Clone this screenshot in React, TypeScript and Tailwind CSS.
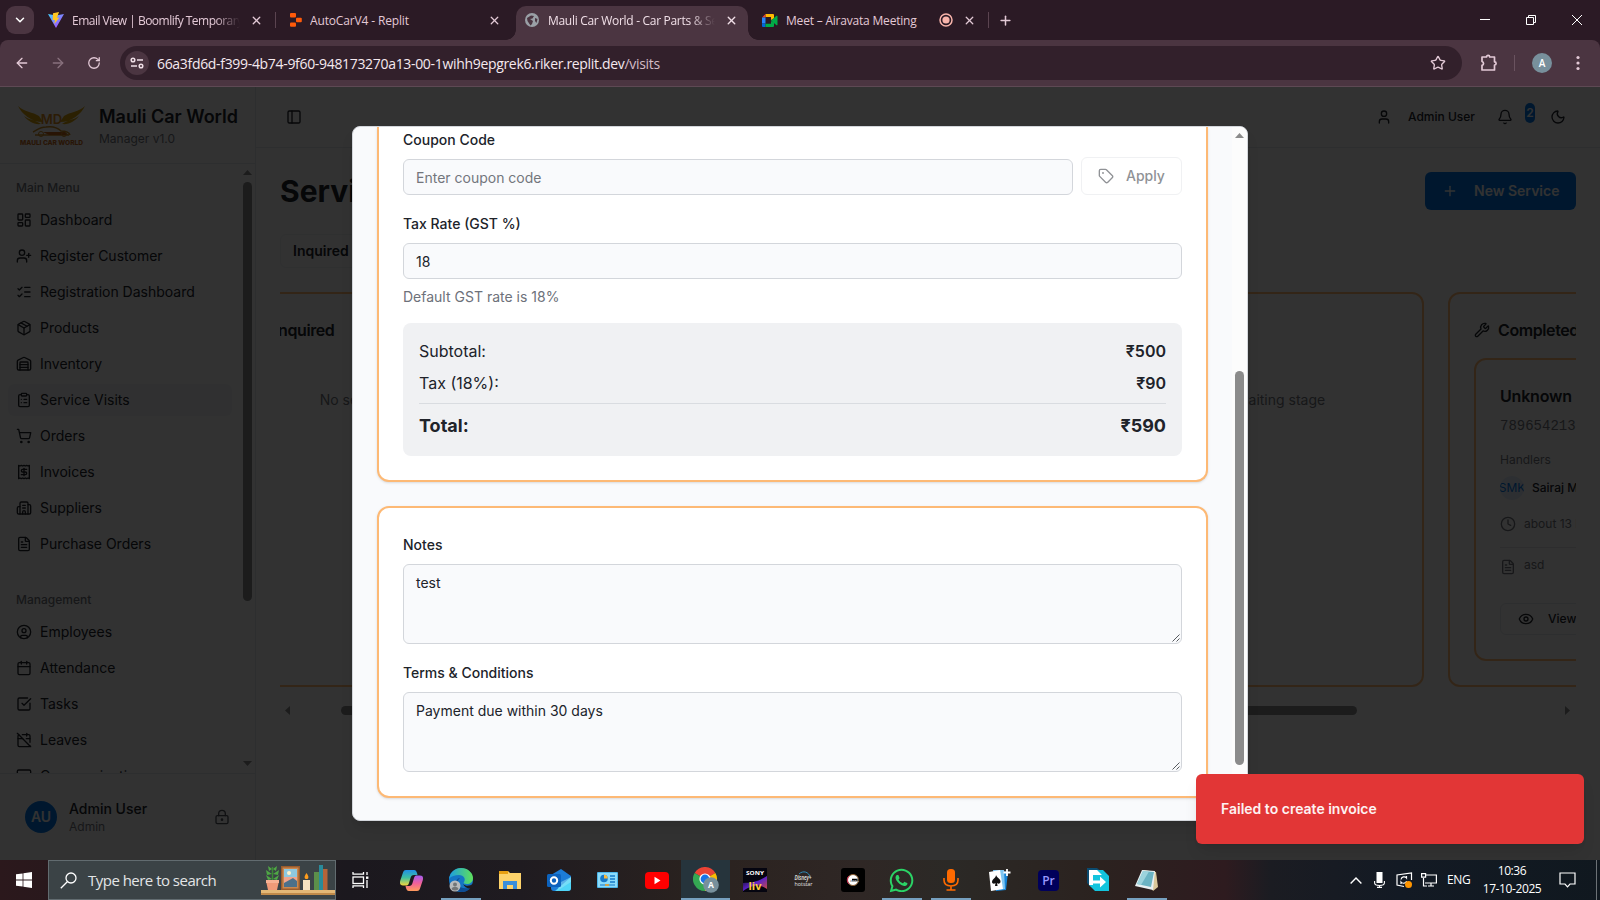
import type { ReactNode } from "react";
import {
  ArrowLeft, ArrowRight, Bell, Building2, Calendar, CalendarOff, ChevronDown, CircleUser, ClipboardList, Clock,
  Eye, FileText, LayoutDashboard, ListChecks, Lock, MessageSquare, Moon, Package, PanelLeft, Plus, Receipt,
  RotateCw, ShoppingCart, SquareCheckBig, Star, Tag, User, UserPlus, Warehouse, Wrench, X,
} from "lucide-react";
import { FaWhatsapp } from "react-icons/fa";

const segoe = "font-['Open_Sans',sans-serif]";

function TabTitle({ children, className = "" }: { children: ReactNode; className?: string }) {
  return <span className={`overflow-hidden whitespace-nowrap pt-[2px] text-[12px] ${className}`}>{children}</span>;
}

function Browser() {
  return (
    <div className={`${segoe} bg-[#2b1a25] text-[#e3c9d6]`}>
      <div className="flex h-10 items-center">
        <div className="ml-1.5 flex h-7 w-7 items-center justify-center rounded-[9px] bg-[#4b3541]">
          <ChevronDown size={14} strokeWidth={2.6} className="text-white" />
        </div>
        <svg className="ml-[14px]" width="16" height="16" viewBox="0 0 16 16">
          <defs>
            <linearGradient id="vite" x1="0" y1="0" x2="1" y2="1"><stop stopColor="#41d1ff" /><stop offset="1" stopColor="#bd34fe" /></linearGradient>
          </defs>
          <path d="M0 2 8 16 16 2 8 3.5Z" fill="url(#vite)" />
          <path d="M11 0 5 1.2 4.7 8H7l-.7 4L11.2 5.8H9Z" fill="#ffc71f" />
        </svg>
        <TabTitle className="ml-2 w-[168px] tracking-[-0.52px] [mask-image:linear-gradient(to_right,#000_85%,transparent)]">Email View | Boomlify Temporary</TabTitle>
        <X size={13} strokeWidth={2.4} className="ml-[10px]" />
        <div className="ml-[12px] h-4 w-px bg-[#5b4450]" />
        <svg className="ml-[14px]" width="12" height="14" viewBox="0 0 12 14" fill="#ff5a0a">
          <rect width="6" height="4.4" rx="1" /><rect x="6" y="4.7" width="5.8" height="4.5" rx="1" /><rect y="9.4" width="6" height="4.4" rx="1" />
        </svg>
        <TabTitle className="ml-[8px] w-[170px] tracking-[-0.15px]">AutoCarV4 - Replit</TabTitle>
        <X size={13} strokeWidth={2.4} className="ml-[8px]" />
        <div className="mt-auto ml-[5px] h-[10px] w-[10px] bg-[radial-gradient(circle_at_0_0,#2b1a25_9.5px,#4b3541_10px)]" />
        <div className="mt-1.5 flex h-[34px] w-[232px] items-center rounded-t-[10px] bg-[#4b3541] pb-1.5 text-[#f0dfe7]">
          <svg className="ml-[9px]" width="14" height="14" viewBox="0 0 14 14">
            <circle cx="7" cy="7" r="7" fill="#9aa0a6" />
            <path d="M2 5 6 2.5 9 3 7.5 5.5 5 6l3 2-1 3-1.5 1.5L2.5 8Z M10 5l2.5 1-1 4-1.5-2Z" fill="#4b3541" />
          </svg>
          <TabTitle className="ml-[9px] w-[167px] tracking-[-0.3px] [mask-image:linear-gradient(to_right,#000_85%,transparent)]">Mauli Car World - Car Parts &amp; Service</TabTitle>
          <X size={13} strokeWidth={2.6} className="ml-[10px]" />
        </div>
        <div className="mt-auto h-[10px] w-[10px] bg-[radial-gradient(circle_at_100%_0,#2b1a25_9.5px,#4b3541_10px)]" />
        <svg className="ml-[4px]" width="16" height="13" viewBox="0 0 16 13">
          <path d="M3.5 0H11a1 1 0 0 1 1 1v3.5L9 6V3H3.5Z" fill="#ffba00" />
          <path d="M0 3.5 3.5 0v3.5Z" fill="#ea4335" />
          <path d="M0 3.5h3.5V9.5H0Z" fill="#2684fc" /><path d="M0 9.5h3.5V13H1a1 1 0 0 1-1-1Z" fill="#0066da" />
          <path d="M3.5 9.8H9V7l3 2v3a1 1 0 0 1-1 1H3.5Z M9 6.5l5.5-4.7c.6-.4 1 0 1 .5v8.4c0 .6-.5.8-1 .5Z" fill="#00ac47" />
        </svg>
        <TabTitle className="ml-[8px] w-[140px] tracking-[-0.2px]">Meet – Airavata Meeting</TabTitle>
        <svg className="ml-[13px]" width="14" height="14" viewBox="0 0 14 14"><circle cx="7" cy="7" r="6" fill="none" stroke="#f8b4ab" strokeWidth="1.5" /><circle cx="7" cy="7" r="3.6" fill="#f8b4ab" /></svg>
        <X size={13} strokeWidth={2.4} className="ml-[10px]" />
        <div className="ml-[12px] h-4 w-px bg-[#5b4450]" />
        <Plus size={15} strokeWidth={2.4} className="ml-[9px]" />
        <svg className="mr-[17px] ml-auto" width="104" height="12" viewBox="0 0 104 12" fill="none" stroke="#fff" strokeWidth="1">
          <path d="M1 5.5h10M47.5 3.5h7v7h-7ZM49.5 3V1.5h7v7H55M93 1l10 10M103 1 93 11" />
        </svg>
      </div>
      <div className="flex h-[47px] items-center rounded-t-[8px] border-b border-[#5e4954] bg-[#4b3541]">
        <ArrowLeft size={16} className="ml-[14px]" />
        <ArrowRight size={16} className="ml-[20px] opacity-40" />
        <RotateCw size={14} strokeWidth={2.2} className="ml-[21px]" />
        <div className="ml-[19px] flex h-[34px] w-[1342px] items-center rounded-full bg-[#32202b] pl-[5px]">
          <div className="flex h-6 w-6 items-center justify-center rounded-full bg-[#4b3541]">
            <svg width="14" height="12" viewBox="0 0 14 12" fill="none" stroke="#f0dfe7" strokeWidth="1.5"><circle cx="3" cy="3" r="1.8" /><path d="M7 3h6M1 9h6" /><circle cx="11" cy="9" r="1.8" /></svg>
          </div>
          <span className="ml-[8px] text-[14px] tracking-[-0.32px] whitespace-nowrap text-[#f5e9ef]">
            66a3fd6d-f399-4b74-9f60-948173270a13-00-1wihh9epgrek6.riker.replit.dev<span className="text-[#d3bcc7]">/visits</span>
          </span>
          <Star size={16} className="mr-[16px] ml-auto" />
        </div>
        <svg className="ml-[18px]" width="18" height="18" viewBox="0 0 18 18" fill="none" stroke="currentColor" strokeWidth="1.7">
          <path d="M2 3h4.5a1.6 1.6 0 0 1 3.2 0H14.5v4.8a1.6 1.6 0 0 1 0 3.2v5H2v-4.6a2 2 0 0 0 0-3.9Z" strokeLinejoin="round" />
        </svg>
        <div className="ml-[16px] h-4 w-px bg-[#6a535f]" />
        <div className="ml-[17px] flex h-5 w-5 items-center justify-center rounded-full bg-[#78909c] text-[10px] font-semibold text-white">A</div>
        <svg className="ml-[24px]" width="4" height="16" viewBox="0 0 4 16" fill="currentColor"><circle cx="2" cy="2.5" r="1.6" /><circle cx="2" cy="8" r="1.6" /><circle cx="2" cy="13.5" r="1.6" /></svg>
      </div>
    </div>
  );
}

const mainMenu = [
  { label: "Dashboard", Icon: LayoutDashboard },
  { label: "Register Customer", Icon: UserPlus },
  { label: "Registration Dashboard", Icon: ListChecks },
  { label: "Products", Icon: Package },
  { label: "Inventory", Icon: Warehouse },
  { label: "Service Visits", Icon: ClipboardList },
  { label: "Orders", Icon: ShoppingCart },
  { label: "Invoices", Icon: Receipt },
  { label: "Suppliers", Icon: Building2 },
  { label: "Purchase Orders", Icon: FileText },
];
const management = [
  { label: "Employees", Icon: CircleUser },
  { label: "Attendance", Icon: Calendar },
  { label: "Tasks", Icon: SquareCheckBig },
  { label: "Leaves", Icon: CalendarOff },
  { label: "Communication", Icon: MessageSquare },
];

function MenuGroup({ title, items }: { title: string; items: typeof mainMenu }) {
  return (
    <div className="p-2">
      <div className="flex h-8 items-center px-2 text-xs font-medium text-[#73767c]">{title}</div>
      <div className="flex flex-col gap-1">
        {items.map(({ label, Icon }) => (
          <div key={label} className={`flex h-8 items-center gap-2 rounded-md px-2 text-sm ${label === "Service Visits" ? "bg-[#f0f1f3]" : ""}`}>
            <Icon size={16} />
            {label}
          </div>
        ))}
      </div>
    </div>
  );
}

function Logo() {
  return (
    <svg width="69" height="42" viewBox="0 0 69 42">
      <path d="M1 2c6 6 15 6 21 10l4 6C14 18 5 10 1 2ZM7 12c5 4 12 4 17 8-7 1-13-3-17-8ZM68 2c-6 6-15 6-21 10l-4 6C55 18 64 10 68 2ZM62 12c-5 4-12 4-17 8 7 1 13-3 17-8Z" fill="#d6a10c" />
      <text x="34.5" y="20" textAnchor="middle" fontSize="13" fontWeight="600" fill="#d98a1d" fontFamily="Inter, sans-serif">MD</text>
      <path d="M16 28c4-2 7-5 13-5 6-1 11 0 15 4 4 0 8 1 9 4M18 31h34" fill="none" stroke="#c98a20" strokeWidth="1.5" />
      <path d="M26 28h22l3 3H32Z" fill="#c8641c" />
      <circle cx="24" cy="30" r="2.5" fill="none" stroke="#c98a20" /><circle cx="47" cy="30" r="2.5" fill="none" stroke="#c98a20" />
      <text x="34.5" y="41" textAnchor="middle" fontSize="6.6" fontWeight="800" textLength="63" fill="#c86a1c" fontFamily="Inter, sans-serif">MAULI CAR WORLD</text>
    </svg>
  );
}

function Sidebar() {
  return (
    <aside className="flex w-64 shrink-0 flex-col border-r border-[#e2e4e8]">
      <div className="flex h-[77px] shrink-0 items-center gap-[13px] border-b border-[#e2e4e8] pl-[17px]">
        <Logo />
        <div>
          <div className="text-lg leading-7 font-semibold whitespace-nowrap">Mauli Car World</div>
          <div className="text-xs text-[#73767c]">Manager v1.0</div>
        </div>
      </div>
      <div className="flex h-[609px] overflow-hidden">
        <div className="flex w-60 flex-col gap-2">
          <MenuGroup title="Main Menu" items={mainMenu} />
          <MenuGroup title="Management" items={management} />
        </div>
        <div className="flex w-[15px] flex-col items-center pt-[6px]">
          <svg width="9" height="5" viewBox="0 0 9 5" fill="#8b8b8b"><path d="M0 5 4.5 0 9 5Z" /></svg>
          <div className="mt-[7px] h-[419px] w-[9px] rounded-full bg-[#8b8b8b]" />
          <svg className="mt-auto mb-[7px]" width="9" height="5" viewBox="0 0 9 5" fill="#8b8b8b"><path d="M0 0 4.5 5 9 0Z" /></svg>
        </div>
      </div>
      <div className="flex flex-1 items-center border-t border-[#e2e4e8] pr-[25px] pl-[25px]">
        <div className="flex h-8 w-8 items-center justify-center rounded-full bg-[#0075e6] text-sm font-semibold text-[#f9fafb]">AU</div>
        <div className="ml-3">
          <div className="text-sm font-medium">Admin User</div>
          <div className="text-xs text-[#73767c]">Admin</div>
        </div>
        <svg className="ml-auto text-[#50545c]" width="16" height="16" viewBox="0 0 24 24" fill="none" stroke="currentColor" strokeWidth="2" strokeLinecap="round" strokeLinejoin="round">
          <circle cx="12" cy="16" r="1" /><rect x="3" y="10" width="18" height="12" rx="2" /><path d="M7 10V7a5 5 0 0 1 10 0v3" />
        </svg>
      </div>
    </aside>
  );
}

function Column({ title, stage }: { title: string; stage: string }) {
  return (
    <div className="h-[395px] w-96 shrink-0 rounded-xl border-2 border-[#fdb975] p-6">
      <div className="flex h-6 items-center gap-2 text-base font-semibold tracking-tight"><Clock size={16} />{title}</div>
      <div className="mt-12 text-center text-sm text-[#73767c]">{stage}</div>
    </div>
  );
}

function Main() {
  return (
    <main className="flex w-[1344px] flex-col">
      <header className="flex h-[61px] shrink-0 items-center border-b border-[#e2e4e8] pr-[34px] pl-[30px]">
        <PanelLeft size={16} />
        <User size={16} className="ml-auto" />
        <span className="ml-4 w-[67px] text-xs font-medium whitespace-nowrap">Admin User</span>
        <Bell size={16} className="ml-[22px]" />
        <span className="mb-2 ml-[12px] flex h-5 w-[10px] items-center justify-center rounded-full bg-[#0075e6] text-xs font-semibold text-[#f9fafb]">2</span>
        <Moon size={16} className="ml-[15px]" />
      </header>
      <div className="flex flex-col px-6 pt-6">
        <div className="flex h-[38px] items-center justify-between">
          <h1 className="text-3xl font-bold">Service Visits</h1>
          <div className="flex h-[38px] w-[151px] items-center rounded-md bg-[#0075e6] pl-[17px] text-sm font-semibold whitespace-nowrap text-[#f9fafb]"><Plus size={16} /><span className="ml-4">New Service</span></div>
        </div>
        <div className="mt-6 flex h-[34px] w-[460px] items-center rounded-md border border-[#eceef1] pl-3 text-sm font-semibold">Inquired</div>
        <div className="mt-6 flex h-[395px] justify-end overflow-hidden">
          <div className="-mr-[256px] flex shrink-0 gap-6">
            <Column title="Inquired" stage="No services in inquired stage" />
            <Column title="Working" stage="No services in working stage" />
            <Column title="Waiting" stage="No services in waiting stage" />
            <div className="h-[395px] w-96 shrink-0 rounded-xl border-2 border-[#fdb975] p-6">
              <div className="flex h-6 items-center gap-2 text-base font-semibold tracking-tight"><Wrench size={16} />Completed</div>
              <div className="mt-4 h-[303px] rounded-xl border-2 border-[#fdb975] px-6 pt-6">
                <div className="text-base leading-6 font-semibold tracking-[-0.2px]">Unknown</div>
                <div className="mt-2 font-['Liberation_Mono',monospace] text-sm leading-5 text-[#73767c]">7896542130</div>
                <div className="mt-4 text-xs text-[#73767c]">Handlers</div>
                <div className="mt-2 flex items-center gap-2 text-xs font-medium">
                  <span className="flex h-6 w-6 items-center justify-center overflow-hidden rounded-full bg-[#e1ebf7] font-normal text-[#0075e6]">SMK</span>Sairaj Mane
                </div>
                <div className="mt-4 flex items-center gap-2 text-xs text-[#73767c]"><Clock size={16} />about 13 hours</div>
                <div className="mt-[15px] flex gap-2 border-t border-[#dfe1e5] pt-[9px] text-xs text-[#73767c]"><FileText size={16} className="mt-[2px]" />asd</div>
                <div className="mt-[28px] flex h-8 items-center rounded-md border border-[#e2e4e8] pl-[17px] text-xs font-medium"><Eye size={16} /><span className="ml-[14px]">View</span></div>
              </div>
            </div>
          </div>
        </div>
        <div className="mt-4 flex h-[15px] items-center pr-[6px] pl-[5px]">
          <svg width="5" height="9" viewBox="0 0 5 9" fill="#8b8b8b"><path d="M5 0 0 4.5 5 9Z" /></svg>
          <div className="ml-[51px] h-[9px] w-[1016px] rounded-full bg-[#8b8b8b]" />
          <svg className="ml-auto" width="5" height="9" viewBox="0 0 5 9" fill="#8b8b8b"><path d="M0 0 5 4.5 0 9Z" /></svg>
        </div>
      </div>
    </main>
  );
}

function Grip() {
  return (
    <svg className="mt-auto ml-auto" width="8" height="8" viewBox="0 0 8 8" stroke="#44474d" strokeWidth="0.9"><path d="M0.5 7.5 7.5 0.5M4.5 7.5 7.5 4.5" /></svg>
  );
}

const field = "rounded-md border border-[#d3d6db] bg-[#f9fafc] px-3 text-sm";

function Dialog() {
  return (
    <section className="flex h-[695px] w-[896px] overflow-hidden rounded-lg border border-[#d3d6db] bg-[#f9fafc] text-[#20232a] shadow-lg">
      <div className="flex w-[855px] flex-col pl-6">
        <div className="h-[355px] w-[831px] shrink-0 rounded-b-xl border-2 border-t-0 border-[#fdb975] bg-white px-6 pt-[6px] shadow-sm">
          <div className="h-[14px] text-sm leading-[14px] font-medium">Coupon Code</div>
          <div className="mt-[10px] flex h-[38px] items-end gap-2">
            <div className={`${field} flex h-9 w-[670px] items-center pt-[2px] text-[#73767c]`}>Enter coupon code</div>
            <div className="flex h-[38px] w-[101px] items-center gap-3 rounded-md border border-[#f0f1f3] pl-4 text-sm font-medium text-[#909296]"><Tag size={16} />Apply</div>
          </div>
          <div className="mt-[22px] h-[14px] text-sm leading-[14px] font-medium">Tax Rate (GST %)</div>
          <div className={`${field} mt-3 flex h-9 items-center pt-[2px]`}>18</div>
          <div className="mt-2 text-sm leading-5 text-[#6d717a]">Default GST rate is 18%</div>
          <div className="mt-4 h-[133px] rounded-lg bg-[#f0f1f3] p-4 text-base">
            <div className="flex justify-between leading-6"><span>Subtotal:</span><span className="font-semibold">₹500</span></div>
            <div className="mt-2 flex justify-between leading-6"><span>Tax (18%):</span><span className="font-semibold">₹90</span></div>
            <div className="mt-2 flex justify-between border-t border-[#d9dce0] pt-2 text-lg leading-7 font-bold"><span>Total:</span><span>₹590</span></div>
          </div>
        </div>
        <div className="mt-6 h-[292px] w-[831px] shrink-0 rounded-xl border-2 border-[#fdb975] bg-white p-6 pt-[30px] shadow-sm">
          <div className="h-[14px] text-sm leading-[14px] font-medium">Notes</div>
          <div className={`${field} mt-3 flex h-20 pt-2 pr-[1px] pb-[1px]`}>test<Grip /></div>
          <div className="mt-[22px] h-[14px] text-sm leading-[14px] font-medium">Terms &amp; Conditions</div>
          <div className={`${field} mt-3 flex h-20 pt-2 pr-[1px] pb-[1px]`}>Payment due within 30 days<Grip /></div>
        </div>
      </div>
      <div className="ml-auto flex w-[15px] flex-col items-center bg-[#fcfcfc] pt-[6px]">
        <svg width="9" height="5" viewBox="0 0 9 5" fill="#8b8b8b"><path d="M0 5 4.5 0 9 5Z" /></svg>
        <div className="mt-[233px] h-[394px] w-[9px] rounded-full bg-[#8b8b8b]" />
      </div>
    </section>
  );
}

function TaskIcon({ children, running = false, active = false }: { children: ReactNode; running?: boolean; active?: boolean }) {
  return (
    <div className={`flex h-10 w-[49px] shrink-0 flex-col items-center ${active ? "bg-[#26343c]" : ""}`}>
      <div className="flex h-[38px] items-center justify-center pt-[2px]">{children}</div>
      <div className={`h-[2px] ${active ? "w-full" : "w-10"} ${running ? "bg-[#76a0bf]" : ""}`} />
    </div>
  );
}

function Taskbar() {
  return (
    <footer className={`${segoe} flex h-10 items-center overflow-hidden bg-[linear-gradient(to_right,#2b181c_0px,#1b181e_350px,#1f1b20_520px,#2a221f_700px,#2f2725_860px,#2b2926_950px,#2b221f_1100px,#2e1b1f_1225px,#1b1c22_1270px,#131a24_1400px,#10181f_1600px)] text-white`}>
      <div className="flex w-12 justify-center">
        <svg width="16" height="16" viewBox="0 0 16 16" fill="#fff"><path d="M0 2.3 6.6 1.4v6.2H0ZM7.4 1.3 16 0v7.6H7.4ZM0 8.4h6.6v6.2L0 13.7ZM7.4 8.4H16V16l-8.6-1.3Z" /></svg>
      </div>
      <div className="flex h-10 w-72 items-center border border-[#626c70] bg-[#3b4346] pl-[11px]">
        <svg width="17" height="17" viewBox="0 0 17 17" fill="none" stroke="#fff" strokeWidth="1.3"><circle cx="11" cy="6" r="5" /><path d="M7.3 9.7.8 16.2" /></svg>
        <span className="ml-[11px] w-[129px] text-[15px] tracking-[-0.52px] whitespace-nowrap text-[#e3e5e6]">Type here to search</span>
        <svg className="ml-auto" width="74" height="34" viewBox="0 0 74 34">
          <rect y="27" width="74" height="5" fill="#e3b877" /><rect y="30" width="74" height="2" fill="#c08a4a" />
          <path d="M5 18h13l-2 9H7Z" fill="#f09a78" /><rect x="5" y="17" width="13" height="3" fill="#f7b193" />
          <path d="M11.5 17V4" stroke="#3b8a35" strokeWidth="1.5" />
          <path d="M11 6 7 3l1 5Zm1 0 4-3-1 5ZM11 11 5 7l1 5Zm1 0 6-4-1 5ZM11 16l-6-4 2 5Zm1 0 6-4-2 5Z" fill="#4fa845" />
          <rect x="20" y="3" width="19" height="24" fill="#9a5c2c" /><rect x="21.5" y="4.500" width="16" height="21" fill="#c98850" />
          <rect x="23" y="6" width="13" height="18" fill="#8ec9e0" /><path d="M23 14h13v10H23Z" fill="#f0a58d" /><path d="M23 20 32 15l4 3v6H23Z" fill="#4c708a" /><circle cx="28" cy="10" r="2" fill="#fff1c9" />
          <rect x="42" y="17" width="7" height="10" fill="#f5e2c0" /><path d="M45.500 10c-3 4-2 6 0 6s3-2 0-6Z" fill="#ff9d1c" />
          <rect x="53" y="9" width="5" height="18" fill="#5c8f4a" /><rect x="58" y="2" width="4" height="25" fill="#2a8b9a" /><rect x="62" y="6" width="4.500" height="21" fill="#b5643a" />
        </svg>
      </div>
      <div className="flex w-[50px] justify-center pr-[2px]">
        <svg width="17" height="16" viewBox="0 0 17 16" fill="none" stroke="#fff" strokeWidth="1.3"><rect x="1" y="5" width="10.5" height="6.5" /><path d="M1 0v2.200h10.500V0M1 16v-2.200h10.500V16M15 0v3M15 8v8" /><rect x="14" y="4.500" width="2.400" height="2.400" fill="#fff" stroke="none" /></svg>
      </div>
      <div className="flex pl-[1px]">
        <TaskIcon>
          <svg width="23" height="21" viewBox="0 0 23 21">
            <defs>
              <linearGradient id="cpa" x1="0" y1="0" x2="0" y2="1"><stop stopColor="#1f8fe8" /><stop offset=".5" stopColor="#3fc0a0" /><stop offset="1" stopColor="#f5d53c" /></linearGradient>
              <linearGradient id="cpb" x1="0" y1="0" x2="0" y2="1"><stop stopColor="#a45cf0" /><stop offset=".5" stopColor="#f0609a" /><stop offset="1" stopColor="#ff9b5c" /></linearGradient>
            </defs>
            <path d="M6 0h8c2 0 2.500 1.500 3 3l.5 2H14c-2 0-3 1-3.500 3l-1.500 5c-.6 2-1.500 2.500-3 2.500H3c-3 0-3.500-2-2.700-5L3 2.500C3.500.8 4.500 0 6 0Z" fill="url(#cpa)" />
            <path d="M17 21H9c-2 0-2.500-1.500-3-3l-.5-2H9c2 0 3-1 3.500-3L14 8c.6-2 1.500-2.500 3-2.500h3c3 0 3.500 2 2.700 5L20 18.500c-.5 1.700-1.500 2.500-3 2.500Z" fill="url(#cpb)" />
          </svg>
        </TaskIcon>
        <TaskIcon running>
          <svg width="24" height="24" viewBox="0 0 24 24">
            <defs><linearGradient id="edge"><stop stopColor="#1b9de2" /><stop offset="1" stopColor="#5fe05a" /></linearGradient></defs>
            <circle cx="12" cy="12" r="12" fill="#1475c5" />
            <path d="M0 11C1 4 6 0 12 0c7 0 12 5 12 10 0 4-3 6-6 6-3 0-4-1-3-2 2-3 0-7-5-7-4 0-8 1-10 4Z" fill="url(#edge)" />
            <path d="M11 10c-5 4-2 12 9 10 1 0 2-1 2-1-2 4-6 5-10 5-5-1-7-6-5-10 1-3 2-4 4-4Z" fill="#0e4c93" />
            <path d="M14 16c3 3 8 2 11-1v4c-5 3-9 1-11-3Z" fill="#1f1b20" />
            <circle cx="6" cy="18" r="5.500" fill="#b8bbbd" /><circle cx="6" cy="16.500" r="2" fill="#737678" /><path d="M2.500 21c1-3 6-3 7 0-2 2-5 2-7 0Z" fill="#737678" />
          </svg>
        </TaskIcon>
        <TaskIcon>
          <svg width="22" height="18" viewBox="0 0 22 18"><path d="M0 0h9l2 2h11v16H0Z" fill="#fdd36b" /><path d="M0 0h9v3H0Z" fill="#e8a012" /><path d="M4 10h14v8h-4v-4H8v4H4Z" fill="#3a8fdb" /></svg>
        </TaskIcon>
        <TaskIcon>
          <svg width="24" height="22" viewBox="0 0 24 22"><path d="M4 6 14 0l10 7v12a3 3 0 0 1-3 3H7a3 3 0 0 1-3-3Z" fill="#1c7cd6" /><path d="M24 8v11a3 3 0 0 1-3 3H8Z" fill="#50d5f7" /><path d="M14 13 24 8v5l-14 9Z" fill="#9be6fa" opacity=".5" /><rect y="5" width="14" height="13" rx="1.500" fill="#0c62bd" /><circle cx="7" cy="11.500" r="3.200" fill="none" stroke="#fff" strokeWidth="2" /></svg>
        </TaskIcon>
        <TaskIcon>
          <svg width="21" height="16" viewBox="0 0 21 16"><rect width="21" height="16" rx="1" fill="#4db6ea" /><rect x="1" y="1" width="19" height="14" fill="#8bdcfb" /><circle cx="7" cy="6.500" r="3.800" fill="#1679c9" /><path d="M7 6.500V2.700a3.800 3.800 0 0 1 3.800 3.800Z" fill="#f6b73c" /><path d="M13 4h5M13 7h5M13 10h5" stroke="#1679c9" strokeWidth="1.400" /><path d="M3 13h15" stroke="#1679c9" /><path d="M8 13h4" stroke="#f6a01c" strokeWidth="1.500" /></svg>
        </TaskIcon>
        <TaskIcon><svg width="24" height="17" viewBox="0 0 24 17"><rect width="24" height="17" rx="4" fill="#f00" /><path d="M9.500 4.700 15.500 8.500l-6 3.800Z" fill="#fff" /></svg></TaskIcon>
        <TaskIcon running active>
          <svg width="26" height="26" viewBox="0 0 26 26">
            <path d="M12 12 1.600 6A12 12 0 0 1 22.400 6Z" fill="#ea4335" /><path d="M12 12 22.400 6A12 12 0 0 1 12 24Z" fill="#fbbc04" /><path d="M12 12 12 24A12 12 0 0 1 1.600 6Z" fill="#34a853" />
            <circle cx="12" cy="12" r="5.600" fill="#fff" /><circle cx="12" cy="12" r="4.400" fill="#1a73e8" />
            <circle cx="18" cy="18" r="7.800" fill="#78909c" /><text x="18" y="21" textAnchor="middle" fontSize="8.500" fontWeight="700" fill="#fff">A</text>
          </svg>
        </TaskIcon>
        <TaskIcon>
          <svg width="24" height="24" viewBox="0 0 24 24">
            <defs><linearGradient id="sony" x1="0" y1="0" x2="1" y2="1"><stop stopColor="#080814" /><stop offset=".5" stopColor="#5c23c9" /><stop offset="1" stopColor="#d94f30" /></linearGradient></defs>
            <rect width="24" height="24" fill="#050510" /><path d="M0 15C8 15 15 14 24 8v13c-8-6-16-4-24 2Z" fill="url(#sony)" />
            <text x="12" y="7" textAnchor="middle" fontSize="6" fontWeight="700" fill="#fff" textLength="18" lengthAdjust="spacingAndGlyphs">SONY</text>
            <text x="12" y="22" textAnchor="middle" fontSize="11" fontWeight="700" fill="#ffcb3d">liv</text>
          </svg>
        </TaskIcon>
        <TaskIcon>
          <svg width="24" height="24" viewBox="0 0 24 24"><path d="M7 6c4-4 10-2 11 3" fill="none" stroke="#2f8dbb" /><text x="11" y="12" textAnchor="middle" fontSize="6.500" fontStyle="italic" fontWeight="600" fill="#e5e5e5" textLength="17" lengthAdjust="spacingAndGlyphs">Disney+</text><text x="11.500" y="18" textAnchor="middle" fontSize="6" fill="#e5e5e5" textLength="18" lengthAdjust="spacingAndGlyphs">hotstar</text></svg>
        </TaskIcon>
        <TaskIcon>
          <svg width="24" height="24" viewBox="0 0 24 24"><rect width="24" height="24" rx="3" fill="#000" /><circle cx="12" cy="12" r="5.500" fill="#fff" stroke="#8a5c30" strokeWidth="1" /><path d="M8 8a5.500 5.500 0 0 0 0 8" fill="none" stroke="#d1305b" /><path d="M11 12h7" stroke="#000" strokeWidth="2.500" /><text x="13.500" y="13.500" textAnchor="middle" fontSize="4" fontWeight="700" fill="#999">zee5</text></svg>
        </TaskIcon>
        <TaskIcon running><FaWhatsapp size={27} color="#2bd366" /></TaskIcon>
        <TaskIcon running>
          <svg width="16" height="22" viewBox="0 0 16 22"><rect x="4" width="8" height="14" rx="3.500" fill="#ff6a00" /><path d="M1 9v2c0 4 3 6 7 6s7-2 7-6V9M8 17v4M3.500 21h9" fill="none" stroke="#ff6a00" strokeWidth="1.600" /></svg>
        </TaskIcon>
        <TaskIcon>
          <svg width="24" height="24" viewBox="0 0 24 24"><path d="M8 2 20 4l-2 18-10 1Z" fill="#1785d8" /><path d="M5 2h11l1 19-9 1Z" fill="#7fc6f2" /><path d="M1 4 12 2l3 19-12 2Z" fill="#fff" /><path d="M8 7c1 3 5 4 4.500 7-.5 2-2.500 2-3.500 1l.6 3H7l.5-3c-1 1-3.500 1-3.500-1 0-3 4-4 4-7Z" fill="#111" /><path d="M19 1v7M15.500 4.500h7" stroke="#fff" strokeWidth="1.800" /></svg>
        </TaskIcon>
        <TaskIcon>
          <svg width="21" height="21" viewBox="0 0 21 21"><rect width="21" height="21" rx="4" fill="#00005b" /><text x="10.500" y="14.500" textAnchor="middle" fontSize="12" fontWeight="600" fill="#9999ff">Pr</text></svg>
        </TaskIcon>
        <TaskIcon>
          <svg width="22" height="24" viewBox="0 0 22 24"><path d="M0 0h10l6 5v14H4l-4-4Z" fill="#0b4a6e" /><path d="M2 2h14l6 6v15H8l-6-6Z" fill="#13c4dd" /><path d="M2 2h8l5 5H6v10H2Z" fill="#fff" /><path d="M6 12.500h7V8.500l6 5.500-6 5.500v-4H6Z" fill="#fff" /></svg>
        </TaskIcon>
        <TaskIcon running>
          <svg width="24" height="22" viewBox="0 0 24 22"><path d="M8 1 21 3l2 15-5 4Z" fill="#d9c79a" /><path d="M7 1 20 2l-2 19L0 17Z" fill="#e8f0f2" /><path d="M8 2 19 3l-3 15L2 15Z" fill="#6bb4c4" /><path d="M8 2l6 .5L6 16l-4-1Z" fill="#a9dbe3" opacity=".8" /></svg>
        </TaskIcon>
      </div>
      <div className="ml-auto flex h-10 items-center">
        <svg width="12" height="7" viewBox="0 0 12 7" fill="none" stroke="#fff" strokeWidth="1.400"><path d="M.6 6.400 6 1l5.400 5.400" /></svg>
        <svg className="ml-[12px]" width="11" height="16" viewBox="0 0 11 16"><rect x="2.500" width="6" height="11" fill="#fff" /><path d="M.6 9v2c0 2 2 2.500 4.900 2.500S10.400 13 10.400 11V9M5.500 13v2.500M3 15.400h5" fill="none" stroke="#fff" strokeWidth="1.100" /></svg>
        <svg className="ml-[11px]" width="17" height="16" viewBox="0 0 17 16" fill="none" stroke="#fff" strokeWidth="1.200"><path d="M8 14.500 1 13V3l14.500-2v7" /><path d="M5 7.500c.5-2.800 4-3.500 5.500-1.500V4M10.500 9c-.5 2.500-4 3-5.500 1v2" /><circle cx="12.500" cy="12.500" r="3.500" fill="#ff9500" stroke="none" /></svg>
        <svg className="ml-[8px]" width="16" height="14" viewBox="0 0 16 14" fill="none" stroke="#fff" strokeWidth="1.200"><path d="M5 2h10.400v8H4M10 10v3M7 13h6M2.500 5v8H6M.6.600h4v3.500h-4Z" /></svg>
        <span className="ml-[10px] w-[23px] text-[12px] tracking-[-0.4px]">ENG</span>
        <div className="ml-[12px] flex w-[60px] flex-col items-center text-[12px] leading-[18px] tracking-[-0.4px] whitespace-nowrap"><span>10:36</span><span>17-10-2025</span></div>
        <svg className="ml-[17px]" width="17" height="16" viewBox="0 0 17 16" fill="none" stroke="#fff" strokeWidth="1.200"><path d="M1 1h15v11h-5l-2.500 2.800L6 12H1Z" /></svg>
        <div className="mr-[3px] ml-[20px] h-10 w-px bg-[#6b7175]" />
      </div>
    </footer>
  );
}

export default function App() {
  return (
    <div className="h-[900px] w-[1600px] overflow-hidden font-['Inter','Noto_Sans',sans-serif]">
      <Browser />
      <div className="relative flex h-[773px] overflow-hidden bg-[#f9fafb] text-[#20232a]">
        <Sidebar />
        <Main />
        <div className="absolute inset-0 flex justify-center bg-black/80 pt-[39px]"><Dialog /></div>
        <div className="absolute right-4 bottom-4 flex h-[70px] w-[388px] items-center rounded-md bg-[#e23636] pl-[25px] text-sm font-semibold text-[#fdf2f2] shadow-lg">Failed to create invoice</div>
      </div>
      <Taskbar />
    </div>
  );
}
